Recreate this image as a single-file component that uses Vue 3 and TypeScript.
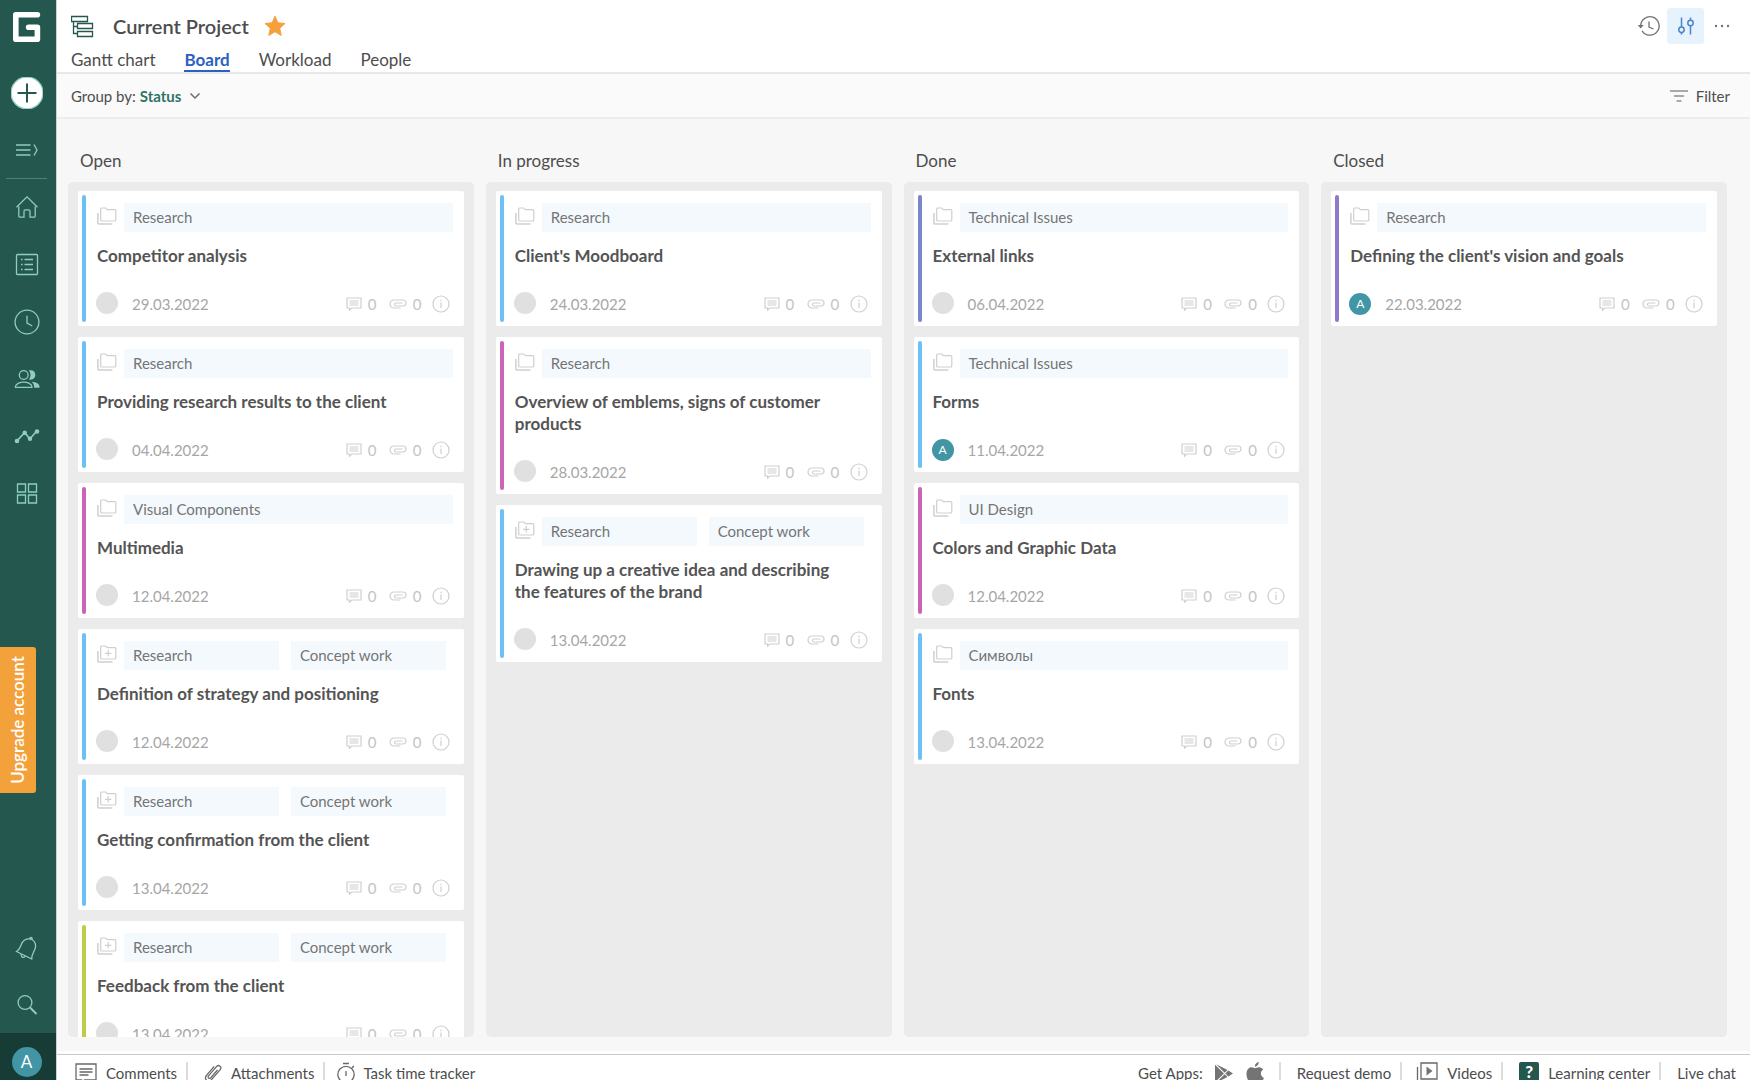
<script setup lang="ts">
interface Card {
  tags: string[]
  title: string
  date: string
  color: string
  assignee?: string
}
interface Column {
  name: string
  cards: Card[]
}

const blue = '#6cc0f3'
const pink = '#cb64b9'
const indigo = '#7986cb'
const violet = '#9179c9'
const lime = '#c0ca4a'

const tabs = ['Gantt chart', 'Board', 'Workload', 'People']
const activeTab = 'Board'

const columns: Column[] = [
  {
    name: 'Open',
    cards: [
      { tags: ['Research'], title: 'Competitor analysis', date: '29.03.2022', color: blue },
      { tags: ['Research'], title: 'Providing research results to the client', date: '04.04.2022', color: blue },
      { tags: ['Visual Components'], title: 'Multimedia', date: '12.04.2022', color: pink },
      { tags: ['Research', 'Concept work'], title: 'Definition of strategy and positioning', date: '12.04.2022', color: blue },
      { tags: ['Research', 'Concept work'], title: 'Getting confirmation from the client', date: '13.04.2022', color: blue },
      { tags: ['Research', 'Concept work'], title: 'Feedback from the client', date: '13.04.2022', color: lime },
    ],
  },
  {
    name: 'In progress',
    cards: [
      { tags: ['Research'], title: "Client's Moodboard", date: '24.03.2022', color: blue },
      { tags: ['Research'], title: 'Overview of emblems, signs of customer products', date: '28.03.2022', color: pink },
      { tags: ['Research', 'Concept work'], title: 'Drawing up a creative idea and describing the features of the brand', date: '13.04.2022', color: blue },
    ],
  },
  {
    name: 'Done',
    cards: [
      { tags: ['Technical Issues'], title: 'External links', date: '06.04.2022', color: indigo },
      { tags: ['Technical Issues'], title: 'Forms', date: '11.04.2022', color: blue, assignee: 'A' },
      { tags: ['UI Design'], title: 'Colors and Graphic Data', date: '12.04.2022', color: pink },
      { tags: ['Символы'], title: 'Fonts', date: '13.04.2022', color: blue },
    ],
  },
  {
    name: 'Closed',
    cards: [
      { tags: ['Research'], title: "Defining the client's vision and goals", date: '22.03.2022', color: violet, assignee: 'A' },
    ],
  },
]
</script>

<template>
  <div class="app">
    <nav class="sidebar" aria-label="Main">
      <a class="logo" href="#" aria-label="Home page">
        <svg width="28" height="30" viewBox="0 0 28 30" fill="none" stroke="#fff" stroke-width="5.6" stroke-linejoin="round" stroke-linecap="round">
          <path d="M24.4 2.8H2.8v24.4h21.6V15.2H15.6" />
        </svg>
      </a>
      <button class="side-btn add" aria-label="Add">
        <svg width="32" height="32" viewBox="0 0 32 32">
          <circle cx="16" cy="16" r="16" fill="#fff" />
          <path d="M16 6.500v19M6.500 16h19" stroke="#24574e" stroke-width="2" />
        </svg>
      </button>
      <button class="side-btn menu" aria-label="Expand menu">
        <svg width="24" height="14" viewBox="0 0 24 14"><path d="M1 2h14.500M1 7h14.500M1 12h14.500M19 1.500l3 5.500-3 5.500" /></svg>
      </button>
      <hr class="side-line" />
      <button class="side-btn" aria-label="Home">
        <svg width="26" height="26" viewBox="0 0 26 26"><path d="M2.500 12.200 13 1.800l10.500 10.400M4.800 11.500V21q0 1.200 1.200 1.200h4v-6q0-1.400 1.400-1.400h3.200q1.400 0 1.400 1.400v6h4q1.200 0 1.200-1.200v-9.500" /></svg>
      </button>
      <button class="side-btn" aria-label="Tasks">
        <svg width="26" height="26" viewBox="0 0 26 26">
          <rect x="2.500" y="2.500" width="21" height="20" rx="1" />
          <path d="M7 7.500h1.600M7 12.500h1.600M7 17.500h1.600M10.500 7.500H19M10.500 12.500H19M10.500 17.500H19" />
        </svg>
      </button>
      <button class="side-btn" aria-label="Time log">
        <svg width="26" height="26" viewBox="0 0 26 26"><circle cx="13" cy="13" r="11.900" /><path d="M13 6.700V14l5.300 3" /></svg>
      </button>
      <button class="side-btn" aria-label="Team">
        <svg width="26" height="26" viewBox="0 0 26 26">
          <circle cx="9.700" cy="9" r="4.400" />
          <path d="M1.500 21.300v-.8c0-2.800 4.500-4.300 8.200-4.300s8.200 1.500 8.200 4.300v.8z" />
          <path class="solid" d="M14.800 4.500c4.500-.7 6.500 1.600 6.500 4.500s-2 5.300-6.500 4.500c2.300-2.300 2.300-6.500 0-9zM17.500 15.700c5 .2 8 2.500 8 4.800v1.200h-5.300c.1-3-1-4.600-2.700-6z" />
        </svg>
      </button>
      <button class="side-btn" aria-label="Reports">
        <svg width="26" height="26" viewBox="0 0 26 26">
          <path stroke-width="1.700" d="m2.800 18 8-8.500 5 6.500 7-8" />
          <g class="solid"><circle cx="3" cy="18" r="2.300" /><circle cx="10.700" cy="9.800" r="2.200" /><circle cx="16" cy="15.800" r="2.200" /><circle cx="23" cy="8.500" r="2.300" /></g>
        </svg>
      </button>
      <button class="side-btn" aria-label="Projects">
        <svg width="26" height="26" viewBox="0 0 26 26"><path d="M3.500 4h8v8h-8zM14.500 4h8v8h-8zM3.500 15h8v8h-8zM14.500 15h8v8h-8z" /></svg>
      </button>
      <span class="side-space"></span>
      <button class="side-btn" aria-label="Notifications">
        <svg width="26" height="26" viewBox="0 0 26 26"><path d="M2.500 16.500c4-2.600 4-6.300 6-9.300 2-2.800 6-4.200 9.300-2.700 3.300 1.500 4.500 5.500 3.400 8.800-1 3.400-3.700 6.200-3.500 10.700zM15.700 3.800c.5-2.400 3.300-1.300 2.300.9M7 19.600c0 2.300 2 3.700 4.200 2" /></svg>
      </button>
      <button class="side-btn" aria-label="Search">
        <svg width="26" height="26" viewBox="0 0 26 26"><circle cx="11" cy="10.500" r="6.900" /><path d="m16 15.500 6.500 6.500" stroke-width="2" /></svg>
      </button>
      <button class="profile" aria-label="Profile"><span class="profile-pic">A</span></button>
      <button class="upgrade">Upgrade account</button>
    </nav>

    <main class="main">
      <header class="header">
        <div class="title-row">
          <svg width="24" height="24" viewBox="0 0 24 24" fill="none" stroke="#24574e" stroke-width="1.300">
            <path d="M.5 2.500h16v5H.5zM6.500 9.500h15v5h-15zM6.500 17.500h15v5h-15zM2.500 7.500v12h4M2.500 12.500h4" />
          </svg>
          <h1>Current Project</h1>
          <svg class="star" width="22" height="22" viewBox="0 0 22 22" fill="#f5a03a" stroke="#f5a03a" stroke-width="1" stroke-linejoin="round"><path d="m11 1.200 2.900 6.600 7.100.7-5.300 4.800 1.500 7.100-6.200-3.700-6.200 3.700 1.500-7.100L1 8.500l7.100-.7z" /></svg>
          <div class="tools">
            <button class="tool" aria-label="History">
              <svg width="24" height="24" viewBox="0 0 24 24" fill="none" stroke="#727272" stroke-width="1.300"><path d="M3.700 12a9.200 9.200 0 1 1 1.400 4.800M12 7.500V13l4.500 2" /><path d="M.8 11h5.900L3.600 14.500z" fill="#727272" stroke="none" /></svg>
            </button>
            <button class="tool on" aria-label="View settings">
              <svg width="20" height="20" viewBox="0 0 20 20" fill="none" stroke="#4a82d2" stroke-width="1.500"><path d="M5.500 1.500v9.500M5.500 16.500v2M14.500 1.500v2.700M14.500 9.700v8.800" /><circle cx="5.500" cy="13.700" r="2.700" /><circle cx="14.500" cy="7" r="2.700" /></svg>
            </button>
            <button class="tool more" aria-label="More">
              <svg width="16" height="4" viewBox="0 0 16 4" fill="#727272"><circle cx="2" cy="2" r="1.200" /><circle cx="8" cy="2" r="1.200" /><circle cx="14" cy="2" r="1.200" /></svg>
            </button>
          </div>
        </div>
        <nav class="tabs" aria-label="Views">
          <a v-for="t in tabs" :key="t" href="#" :class="{ active: t === activeTab }">{{ t }}</a>
        </nav>
      </header>

      <div class="toolbar">
        <span>Group by:</span>
        <button class="group">
          Status
          <svg width="12" height="8" viewBox="0 0 12 8" fill="none" stroke="#6b6b6b" stroke-width="1.500"><path d="m1.500 1.500 4.500 4.500 4.500-4.500" /></svg>
        </button>
        <button class="filter">
          <svg width="18" height="14" viewBox="0 0 18 14" fill="none" stroke="#8f8f8f" stroke-width="1.500"><path d="M0 2h18M4 7h10M6.500 12h5" /></svg>
          Filter
        </button>
      </div>

      <div class="board">
        <section v-for="col in columns" :key="col.name" class="column">
          <h2>{{ col.name }}</h2>
          <div class="lane">
            <article v-for="card in col.cards" :key="card.title" class="card">
              <span class="stripe" :style="{ background: card.color }"></span>
              <div class="tags" :class="{ pair: card.tags.length > 1 }">
                <svg width="20" height="18" viewBox="0 0 20 18" fill="none" stroke="#cfcfcf" stroke-width="1.200">
                  <path d="M3.700 2q0-1 1-1h4l1.700 1.600h7.400q1 0 1 1V13q0 1-1 1H4.700q-1 0-1-1z" />
                  <path d="M.9 6v10q0 1 1 1h13.500" stroke-width="1.500" />
                  <path v-if="card.tags.length > 1" d="M8 8.300h6.400M11.200 5.100v6.400" />
                </svg>
                <span v-for="tag in card.tags" :key="tag" class="tag">{{ tag }}</span>
              </div>
              <h3>{{ card.title }}</h3>
              <div class="meta">
                <span class="avatar" :class="{ filled: card.assignee }">{{ card.assignee }}</span>
                <time>{{ card.date }}</time>
                <svg class="ico" width="16" height="14" viewBox="0 0 16 14"><path d="M1 1h14v10H5.800L3.500 13.200V11H1zM3.500 4h9M3.500 6h9M3.500 8h9" /></svg>
                <span class="count">0</span>
                <svg class="ico clip" width="18" height="10" viewBox="0 0 18 10"><path d="M11.500 9H5a4 4 0 0 1 0-8h9a3 3 0 0 1 0 6H7a1.400 1.400 0 0 1 0-3h6.500" /></svg>
                <span class="count">0</span>
                <svg class="ico info" width="18" height="18" viewBox="0 0 18 18"><circle cx="9" cy="9" r="8" /><path d="M9 7.500v5.500M9 4.800v1.400" /></svg>
              </div>
            </article>
          </div>
        </section>
      </div>

      <footer class="footer">
        <button class="foot-item comments">
          <svg width="22" height="20" viewBox="0 0 22 20"><path d="M1 1h20v16H9.500L6.500 19.500V17H1zM4.500 6h13M4.500 9h13M4.500 12h9" /></svg>
          Comments
        </button>
        <button class="foot-item attachments">
          <svg width="18" height="20" viewBox="0 0 18 20"><path d="m13.500 7-6.700 7.700c-1.500 1.600-3.700-.2-2.300-1.900l8-9.200c2.300-2.500 5.800.3 3.700 3l-8.700 10c-3.200 3.400-8-.3-5-4.300l7.700-8.900" /></svg>
          Attachments
        </button>
        <button class="foot-item timer">
          <svg width="18" height="22" viewBox="0 0 18 22"><circle cx="9" cy="12.500" r="8.200" /><path d="M9 9v5M6 1.500h6M15 6l1.800-2" /></svg>
          Task time tracker
        </button>
        <div class="foot-item apps">
          Get Apps:
          <a href="#" aria-label="Google Play">
            <svg width="18" height="20" viewBox="0 0 18 20"><path class="dark" d="M0 1.800 9 10.500 0 19.200zM1.200 1.300l11.300 5.800-2.800 2.700zM13.300 7.600l4.700 2.900-4.700 2.900-3-2.900zM1.200 19.700l11.300-5.800-2.800-2.700z" /></svg>
          </a>
          <a href="#" aria-label="App Store">
            <svg width="20" height="22" viewBox="0 0 20 22"><path class="dark" d="M13.800 0c.2 2-1.700 4.600-4 4.600C9.500 2.400 11.600.3 13.800 0zM10 6.300c1 0 2.200-1 4-1 1.800 0 3.500 1 4.300 2.300-3.600 2-3 7 .6 8.400-1 2.700-2.600 5-4.400 5-1.500 0-2-.9-3.900-.9s-2.500.9-3.900.9C4.300 21 1.500 16.500 1.500 12s2.600-6.700 5-6.700c1.600 0 2.600 1 3.500 1z" /></svg>
          </a>
        </div>
        <a class="foot-item" href="#">Request demo</a>
        <a class="foot-item videos" href="#">
          <svg width="22" height="22" viewBox="0 0 22 22"><path d="M5 1h16v16H5zM1.500 5v16H17" /><path class="dark" d="m10.500 4.500 6 4.500-6 4.500z" /></svg>
          Videos
        </a>
        <a class="foot-item" href="#">
          <span class="help">?</span>
          Learning center
        </a>
        <a class="foot-item" href="#">Live chat</a>
      </footer>
    </main>
  </div>
</template>

<style>
body {
  margin: 0;
  overflow: hidden;
}
</style>

<style scoped>
.app {
  display: flex;
  height: 100vh;
  font-family: Lato, "Noto Sans", sans-serif;
  font-size: 15px;
  color: #4d4d4d;
  background: #fff;
}
.app *,
.app {
  box-sizing: border-box;
}
button {
  padding: 0;
  border: 0;
  background: none;
  font: inherit;
  color: inherit;
}
a {
  color: inherit;
  text-decoration: none;
}
svg {
  display: block;
  flex: none;
}
h1,
h2,
h3 {
  margin: 0;
}

/* sidebar */
.sidebar {
  position: relative;
  display: flex;
  flex: none;
  flex-direction: column;
  width: 57px;
  background: #24574e;
  border-right: 1px solid #d0d0d0;
}
.logo {
  margin: 12px 0 0 13px;
}
.side-btn {
  display: flex;
  align-items: center;
  justify-content: center;
  width: 54px;
  height: 57px;
}
.side-btn svg {
  fill: none;
  stroke: #8fcdc1;
  stroke-width: 1.3;
}
.side-btn.add {
  margin-top: 22px;
}
.side-btn .solid {
  fill: #8fcdc1;
  stroke: none;
}
.side-line {
  width: 41px;
  height: 1px;
  margin: 0 6px;
  border: 0;
  background: #47857a;
}
.side-space {
  flex: 1;
}
.profile {
  display: flex;
  justify-content: center;
  width: 56px;
  height: 47px;
  padding: 14px 3px 0 0;
  background: #163c35;
}
.profile-pic {
  width: 30px;
  height: 30px;
  border-radius: 50%;
  background: #4195a5;
  color: #fff;
  font-size: 17px;
  line-height: 30px;
}
.upgrade {
  position: absolute;
  top: 647px;
  left: 0;
  width: 36px;
  height: 146px;
  border-radius: 0 3px 3px 0;
  background: #f3a13b;
  color: #fff;
  font-size: 17px;
  font-weight: 600;
  line-height: 36px;
  writing-mode: sideways-lr;
}

/* header */
.main {
  display: flex;
  flex: 1;
  flex-direction: column;
  min-width: 0;
}
.header {
  flex: none;
  height: 74px;
  padding: 8px 14px 0;
  border-bottom: 2px solid #e8e8e8;
}
.title-row {
  display: flex;
  align-items: center;
  height: 36px;
}
h1 {
  margin-left: 18px;
  font-size: 20px;
  font-weight: 600;
  line-height: 24px;
}
.star {
  margin-left: 15px;
}
.tools {
  display: flex;
  margin-left: auto;
}
.tool {
  display: flex;
  align-items: center;
  justify-content: center;
  width: 37px;
  height: 36px;
  border-radius: 3px;
}
.tool.on {
  background: #e6f2fc;
}
.tool.more {
  width: 32px;
  padding-left: 4px;
}
.tabs {
  display: flex;
  gap: 29px;
  height: 28px;
  font-size: 17px;
  line-height: 32px;
}
.tabs a.active {
  border-bottom: 2px solid #2b62c2;
  color: #2b62c2;
  font-weight: 700;
}

/* toolbar */
.toolbar {
  display: flex;
  flex: none;
  align-items: center;
  height: 45px;
  padding: 0 20px 0 14px;
  border-bottom: 2px solid #ededed;
  background: #fafafa;
}
.group {
  display: flex;
  align-items: center;
  gap: 8px;
  margin-left: 4px;
  color: #2f7366;
  font-weight: 700;
}
.filter {
  display: flex;
  align-items: center;
  gap: 8px;
  margin-left: auto;
}

/* board */
.board {
  display: grid;
  flex: 1;
  grid-template-columns: repeat(4, minmax(0, 1fr));
  gap: 12px;
  min-height: 0;
  padding: 0 23px 14px 11px;
  border-bottom: 3px solid #fdfdfd;
  background: #f7f7f7;
}
.column {
  display: flex;
  flex-direction: column;
  min-height: 0;
}
h2 {
  flex: none;
  height: 63px;
  padding: 31px 12px 0;
  font-size: 17px;
  font-weight: 400;
  line-height: 22px;
}
.lane {
  display: flex;
  flex: 1;
  flex-direction: column;
  gap: 11px;
  min-height: 0;
  padding: 9px 10px 0;
  overflow: hidden;
  border-radius: 5px;
  background: #ebebeb;
}
.card {
  position: relative;
  flex: none;
  padding: 12px 11px 10px 19px;
  border-radius: 2px;
  background: #fff;
}
.stripe {
  position: absolute;
  top: 4px;
  bottom: 4px;
  left: 4px;
  width: 4px;
  border-radius: 2px;
}
.tags {
  display: flex;
  gap: 12px;
  color: #757575;
  line-height: 29px;
}
.tags svg {
  margin: 4px -5px 0 0;
}
.tags.pair {
  padding-right: 7px;
}
.tag {
  flex: 1;
  height: 29px;
  padding: 0 9px;
  background: #f4f9fe;
}
h3 {
  margin: 13px 0 25px;
  padding: 0 30px 0 0;
  color: #545454;
  font-size: 17px;
  font-weight: 700;
  line-height: 22px;
}
.meta {
  display: flex;
  align-items: center;
  height: 24px;
  padding-right: 3px;
  color: #a6a6a6;
}
.avatar {
  width: 22px;
  height: 22px;
  margin: 0 14px 2px -1px;
  border-radius: 50%;
  background: #e0e0e0;
  color: #fff;
  font-size: 12px;
  line-height: 22px;
  text-align: center;
}
.avatar.filled {
  margin-bottom: 0;
  background: #4195a5;
}
time {
  flex: 1;
}
.ico {
  fill: none;
  stroke: #cfcfcf;
  stroke-width: 1.2;
}
.count {
  width: 9px;
  margin: 0 12px 0 6px;
  color: #c4c4c4;
}
.ico.info {
  margin-left: -2px;
}

/* bottom bar */
.footer {
  display: flex;
  flex: none;
  height: 26px;
  padding: 7px 14px 0 0;
  overflow: hidden;
  border-top: 1px solid #c9c9c9;
}
.foot-item {
  display: flex;
  align-items: center;
  gap: 9px;
  height: 22px;
  padding: 0 9px 0 16px;
  border-right: 2px solid #dcdcdc;
  white-space: nowrap;
}
.foot-item:last-child {
  padding-right: 0;
  border: 0;
}
.foot-item.comments {
  padding-left: 18px;
}
.foot-item.timer {
  gap: 8px;
  padding-left: 12px;
  border: 0;
}
.foot-item.apps {
  gap: 12px;
  margin-left: auto;
  padding-right: 14px;
}
.foot-item.videos {
  padding-left: 14px;
}
.footer svg {
  fill: none;
  stroke: #686868;
  stroke-width: 1.3;
}
.footer .dark {
  fill: #747474;
  stroke: none;
}
.help {
  width: 20px;
  height: 22px;
  border-radius: 2px;
  background: #24574e;
  color: #fff;
  font-size: 17px;
  font-weight: 900;
  line-height: 20px;
  text-align: center;
}
</style>
